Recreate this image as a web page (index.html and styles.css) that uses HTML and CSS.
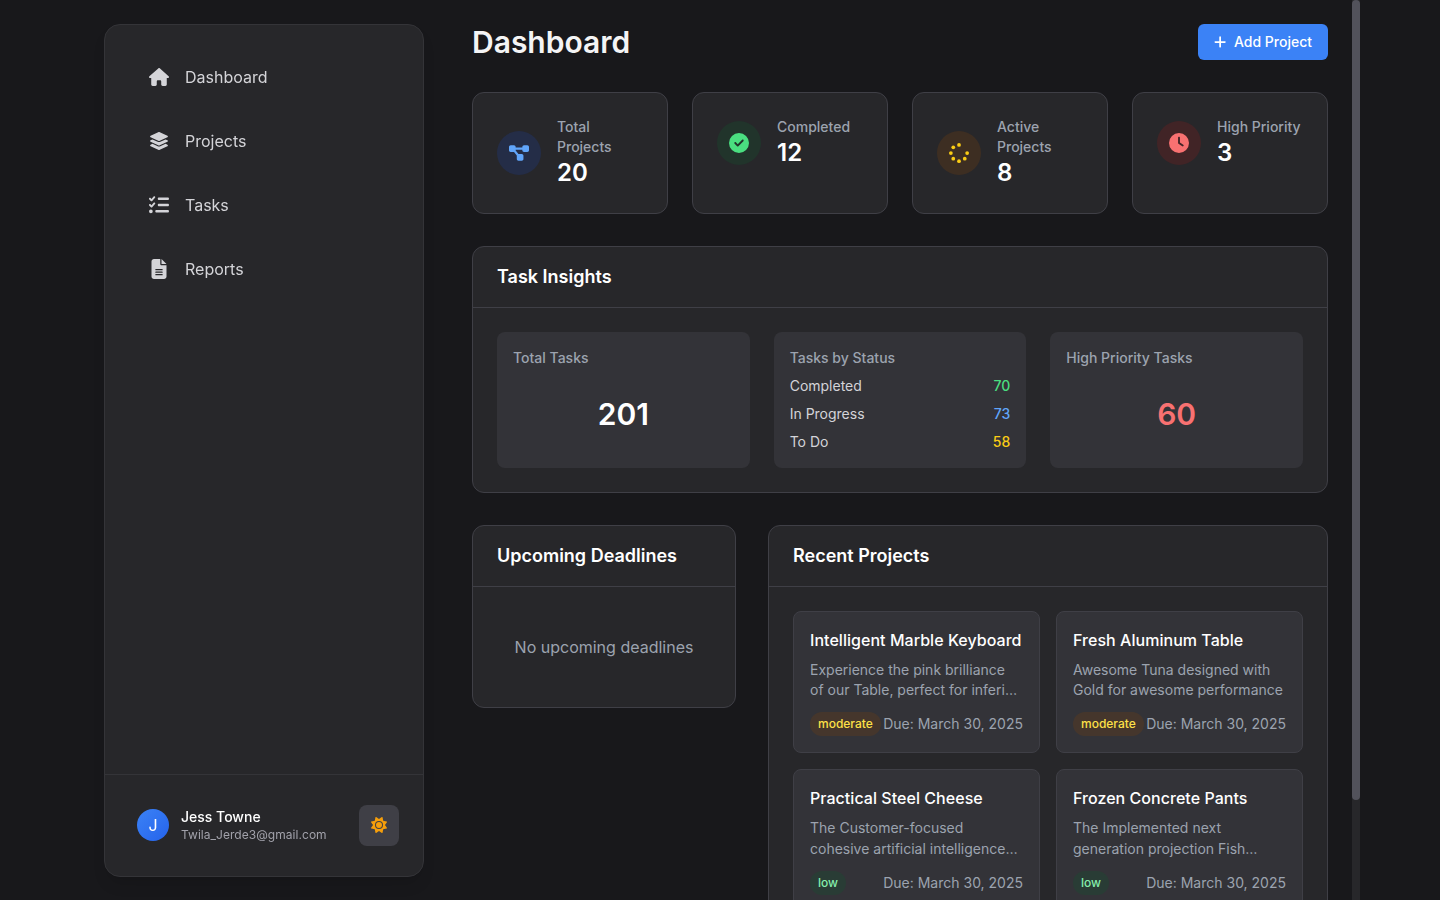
FILE: index.html
```html
<!DOCTYPE html>
<html lang="en">
<head>
<meta charset="utf-8">
<title>Dashboard</title>
<link rel="stylesheet" href="styles.css">
</head>
<body>
<div class="shell">
  <aside class="sidebar">
    <nav class="nav">
      <a class="nav-item"><span class="nav-icon"><svg viewBox="0 0 576 512"><path d="M575.8 255.5c0 18-15 32.1-32 32.1h-32l.7 160.2c0 2.7-.2 5.4-.5 8.1V472c0 22.1-17.9 40-40 40H456c-1.1 0-2.2 0-3.3-.1c-1.4 .1-2.8 .1-4.2 .1H416 392c-22.1 0-40-17.9-40-40V448 384c0-17.7-14.3-32-32-32H256c-17.7 0-32 14.3-32 32v64 24c0 22.1-17.9 40-40 40H160 128.1c-1.5 0-3-.1-4.5-.2c-1.2 .1-2.4 .2-3.6 .2H104c-22.1 0-40-17.9-40-40V360c0-.9 0-1.9 .1-2.8V287.6H32c-18 0-32-14-32-32.1c0-9 3-17 10-24L266.4 8c7-7 15-8 22-8s15 2 21 7L564.8 231.5c8 7 12 15 11 24z"/></svg></span>Dashboard</a>
      <a class="nav-item"><span class="nav-icon"><svg viewBox="0 0 576 512"><path d="M264.5 5.2c14.9-6.9 32.1-6.9 47 0l218.6 101c8.5 3.9 13.9 12.4 13.9 21.8s-5.4 17.9-13.9 21.8l-218.6 101c-14.9 6.9-32.1 6.9-47 0L45.9 149.8C37.4 145.8 32 137.3 32 128s5.4-17.9 13.9-21.8L264.5 5.2zM476.9 209.6l53.2 24.6c8.5 3.9 13.9 12.4 13.9 21.8s-5.4 17.9-13.9 21.8l-218.6 101c-14.9 6.9-32.1 6.9-47 0L45.9 277.8C37.4 273.8 32 265.3 32 256s5.4-17.9 13.9-21.8l53.2-24.6 152 70.2c23.4 10.8 50.4 10.8 73.8 0l152-70.2zm-152 198.2l152-70.2 53.2 24.6c8.5 3.9 13.9 12.4 13.9 21.8s-5.4 17.9-13.9 21.8l-218.6 101c-14.9 6.9-32.1 6.9-47 0L45.9 405.8C37.4 401.8 32 393.3 32 384s5.4-17.9 13.9-21.8l53.2-24.6 152 70.2c23.4 10.8 50.4 10.8 73.8 0z"/></svg></span>Projects</a>
      <a class="nav-item"><span class="nav-icon"><svg viewBox="0 0 512 512"><path d="M152.1 38.2c9.9 8.9 10.7 24 1.8 33.9l-72 80c-4.4 4.9-10.6 7.8-17.2 7.9s-12.9-2.4-17.6-7L7 113C-2.3 103.6-2.3 88.4 7 79s24.6-9.4 33.9 0l22.1 22.1 55.1-61.2c8.9-9.9 24-10.7 33.9-1.8zm0 160c9.9 8.9 10.7 24 1.8 33.9l-72 80c-4.4 4.9-10.6 7.8-17.2 7.9s-12.9-2.4-17.6-7L7 273c-9.4-9.4-9.4-24.6 0-33.9s24.6-9.4 33.9 0l22.1 22.1 55.1-61.2c8.9-9.9 24-10.7 33.9-1.8zM224 96c0-17.7 14.3-32 32-32H480c17.7 0 32 14.3 32 32s-14.3 32-32 32H256c-17.7 0-32-14.3-32-32zm0 160c0-17.7 14.3-32 32-32H480c17.7 0 32 14.3 32 32s-14.3 32-32 32H256c-17.7 0-32-14.3-32-32zM160 416c0-17.7 14.3-32 32-32H480c17.7 0 32 14.3 32 32s-14.3 32-32 32H192c-17.7 0-32-14.3-32-32zM48 368a48 48 0 1 1 0 96 48 48 0 1 1 0-96z"/></svg></span>Tasks</a>
      <a class="nav-item"><span class="nav-icon"><svg viewBox="0 0 384 512"><path d="M64 0C28.7 0 0 28.7 0 64V448c0 35.3 28.7 64 64 64H320c35.3 0 64-28.7 64-64V160H256c-17.7 0-32-14.3-32-32V0H64zM256 0V128H384L256 0zM112 256H272c8.8 0 16 7.2 16 16s-7.2 16-16 16H112c-8.8 0-16-7.2-16-16s7.2-16 16-16zm0 64H272c8.8 0 16 7.2 16 16s-7.2 16-16 16H112c-8.8 0-16-7.2-16-16s7.2-16 16-16zm0 64H272c8.8 0 16 7.2 16 16s-7.2 16-16 16H112c-8.8 0-16-7.2-16-16s7.2-16 16-16z"/></svg></span>Reports</a>
    </nav>
    <div class="account">
      <div class="avatar">J</div>
      <div class="who">
        <div class="who-name">Jess Towne</div>
        <div class="who-mail">Twila_Jerde3@gmail.com</div>
      </div>
      <button class="theme"><svg viewBox="0 0 512 512"><path d="M361.5 1.2c5 2.1 8.6 6.6 9.6 11.9L391 121l107.9 19.8c5.3 1 9.8 4.6 11.9 9.6s1.5 10.7-1.6 15.2L446.9 256l62.3 90.3c3.1 4.5 3.7 10.2 1.6 15.2s-6.6 8.6-11.9 9.6L391 391 371.1 498.9c-1 5.3-4.6 9.8-9.6 11.9s-10.7 1.5-15.2-1.6L256 446.9l-90.3 62.3c-4.5 3.1-10.2 3.7-15.2 1.6s-8.6-6.6-9.6-11.9L121 391 13.1 371.1c-5.3-1-9.8-4.6-11.9-9.6s-1.5-10.7 1.6-15.2L65.1 256 2.8 165.7c-3.1-4.5-3.7-10.2-1.6-15.2s6.6-8.6 11.9-9.6L121 121 140.9 13.1c1-5.3 4.6-9.8 9.6-11.9s10.7-1.5 15.2 1.6L256 65.1 346.3 2.8c4.5-3.1 10.2-3.7 15.2-1.6zM160 256a96 96 0 1 1 192 0 96 96 0 1 1 -192 0zm224 0a128 128 0 1 0 -256 0 128 128 0 1 0 256 0z"/></svg></button>
    </div>
  </aside>

  <main class="main">
    <header class="top">
      <h1>Dashboard</h1>
      <button class="add"><svg viewBox="0 0 448 512"><path d="M256 80c0-17.700-14.300-32-32-32s-32 14.300-32 32V224H48c-17.700 0-32 14.300-32 32s14.300 32 32 32H192V432c0 17.700 14.300 32 32 32s32-14.300 32-32V288H400c17.700 0 32-14.300 32-32s-14.300-32-32-32H256V80z"/></svg>Add Project</button>
    </header>

    <section class="stats">
      <div class="card stat">
        <div class="disc blue"><svg viewBox="0 0 576 512"><path d="M0 80C0 53.500 21.500 32 48 32h96c26.500 0 48 21.500 48 48V96H384V80c0-26.500 21.500-48 48-48h96c26.500 0 48 21.500 48 48v96c0 26.500-21.500 48-48 48H432c-26.500 0-48-21.500-48-48V160H192v16c0 1.700-.1 3.400-.3 5L272 288h96c26.500 0 48 21.500 48 48v96c0 26.500-21.500 48-48 48H272c-26.500 0-48-21.500-48-48V336c0-1.700 .1-3.400 .3-5L144 224H48c-26.500 0-48-21.500-48-48V80z"/></svg></div>
        <div class="stat-text"><div class="label">Total Projects</div><div class="value">20</div></div>
      </div>
      <div class="card stat">
        <div class="disc green"><svg viewBox="0 0 512 512"><path d="M256 512A256 256 0 1 0 256 0a256 256 0 1 0 0 512zM369 209L241 337c-9.400 9.400-24.600 9.400-33.900 0l-64-64c-9.400-9.400-9.400-24.600 0-33.900s24.600-9.400 33.900 0l47 47L335 175c9.400-9.400 24.600-9.400 33.900 0s9.400 24.600 0 33.900z"/></svg></div>
        <div class="stat-text"><div class="label">Completed</div><div class="value">12</div></div>
      </div>
      <div class="card stat">
        <div class="disc yellow"><svg viewBox="0 0 512 512"><circle cx="256" cy="48" r="48"/><circle cx="256" cy="464" r="48"/><circle cx="48" cy="256" r="48"/><circle cx="464" cy="256" r="48"/><circle cx="109" cy="109" r="48"/><circle cx="109" cy="403" r="48"/><circle cx="403" cy="403" r="48"/></svg></div>
        <div class="stat-text"><div class="label">Active Projects</div><div class="value">8</div></div>
      </div>
      <div class="card stat">
        <div class="disc red"><svg viewBox="0 0 512 512"><path d="M256 0a256 256 0 1 1 0 512A256 256 0 1 1 256 0zM232 120V256c0 8 4 15.500 10.700 20l96 64c11 7.400 25.900 4.400 33.300-6.700s4.400-25.900-6.700-33.300L280 243.200V120c0-13.300-10.700-24-24-24s-24 10.700-24 24z"/></svg></div>
        <div class="stat-text"><div class="label">High Priority</div><div class="value">3</div></div>
      </div>
    </section>

    <section class="card insights">
      <h2>Task Insights</h2>
      <div class="tiles">
        <div class="tile"><div class="label">Total Tasks</div><div class="big">201</div></div>
        <div class="tile">
          <div class="label">Tasks by Status</div>
          <div class="row"><span>Completed</span><b class="t-green">70</b></div>
          <div class="row"><span>In Progress</span><b class="t-blue">73</b></div>
          <div class="row"><span>To Do</span><b class="t-yellow">58</b></div>
        </div>
        <div class="tile"><div class="label">High Priority Tasks</div><div class="big t-red">60</div></div>
      </div>
    </section>

    <div class="lower">
      <section class="card">
        <h2>Upcoming Deadlines</h2>
        <div class="empty">No upcoming deadlines</div>
      </section>
      <section class="card">
        <h2>Recent Projects</h2>
        <div class="projects">
          <article class="project">
            <h3>Intelligent Marble Keyboard</h3>
            <p>Experience the pink brilliance<br>of our Table, perfect for inferi…</p>
            <div class="meta"><span class="badge moderate">moderate</span><span>Due: March 30, 2025</span></div>
          </article>
          <article class="project">
            <h3>Fresh Aluminum Table</h3>
            <p>Awesome Tuna designed with<br>Gold for awesome performance</p>
            <div class="meta"><span class="badge moderate">moderate</span><span>Due: March 30, 2025</span></div>
          </article>
          <article class="project">
            <h3>Practical Steel Cheese</h3>
            <p>The Customer-focused<br>cohesive artificial intelligence…</p>
            <div class="meta"><span class="badge low">low</span><span>Due: March 30, 2025</span></div>
          </article>
          <article class="project">
            <h3>Frozen Concrete Pants</h3>
            <p>The Implemented next<br>generation projection Fish…</p>
            <div class="meta"><span class="badge low">low</span><span>Due: March 30, 2025</span></div>
          </article>
        </div>
      </section>
    </div>
  </main>
  <div class="scroll"><div class="thumb"></div></div>
</div>
</body>
</html>
```

FILE: styles.css
```css
* { box-sizing: border-box; margin: 0; padding: 0; }
body {
  background: #18181b;
  color: #fff;
  font-family: Inter, "Liberation Sans", sans-serif;
  font-size: 16px;
  line-height: 24px;
  height: 100vh;
  overflow: hidden;
}
button { border: 0; font: inherit; color: inherit; }
svg { display: block; fill: currentColor; }

.shell { width: 1280px; height: 900px; margin: 0 auto; display: flex; overflow: hidden; }

.sidebar {
  width: 320px;
  height: 853px;
  margin: 24px 0 0 24px;
  flex: none;
  display: flex;
  flex-direction: column;
  background: #27272a;
  border: 1px solid #343438;
  border-radius: 16px;
  box-shadow: 0 10px 15px -3px rgba(0, 0, 0, .1), 0 4px 6px -4px rgba(0, 0, 0, .1);
  will-change: transform;
}
.nav { flex: 1; padding: 28px 32px; display: flex; flex-direction: column; gap: 16px; }
.nav-item { height: 48px; padding-left: 12px; display: flex; align-items: center; gap: 16px; color: #d4d4d8; }
.nav-icon { width: 20px; height: 20px; display: flex; justify-content: center; align-items: center; }
.nav-icon svg { width: 20px; height: 20px; }
.account { height: 102px; border-top: 1px solid #343438; padding: 0 24px 1px 32px; display: flex; align-items: center; }
.avatar {
  width: 32px; height: 32px; border-radius: 50%;
  background: linear-gradient(135deg, #3b82f6, #2563eb);
  display: flex; align-items: center; justify-content: center;
}
.who { margin-left: 12px; flex: 1; }
.who-name { font-size: 14px; font-weight: 500; line-height: 20px; }
.who-mail { font-size: 12px; line-height: 16px; color: #a1a1aa; letter-spacing: .04px; }
.theme {
  width: 40px; height: 41px; margin-top: 1px; padding-bottom: 1px; border-radius: 8px; background: #3f3f46; color: #f59e0b;
  display: flex; align-items: center; justify-content: center;
}
.theme svg { width: 16px; height: 16px; }

.main { width: 928px; flex: none; padding: 24px 24px 0 48px; }
.top { height: 36px; display: flex; align-items: center; justify-content: space-between; margin-bottom: 32px; }
h1 { font-size: 30px; line-height: 36px; font-weight: 600; color: #f4f4f5; }
.add {
  height: 36px; padding: 0 16px; border-radius: 6px; background: #3b82f6;
  font-size: 14px; font-weight: 500; display: flex; align-items: center; gap: 8px;
}
.add svg { width: 12.25px; height: 14px; }

.card { background: #27272a; border: 1px solid #3f3f46; border-radius: 12px; }
.stats { display: grid; grid-template-columns: repeat(4, 1fr); gap: 24px; margin-bottom: 32px; }
.stat { height: 122px; padding: 24px; display: flex; align-items: flex-start; gap: 16px; }
.stat-text { flex: 1; margin-right: -4px; }
.disc { width: 44px; height: 44px; border-radius: 50%; flex: none; display: flex; align-items: center; justify-content: center; margin-top: 4px; }
.stat:nth-child(odd) .disc { margin-top: 14px; }
.disc svg { width: 20px; height: 20px; }
.blue { background: rgba(30, 58, 138, .3); color: #60a5fa; }
.green { background: rgba(20, 83, 45, .3); color: #4ade80; }
.yellow { background: rgba(113, 63, 18, .3); color: #facc15; }
.red { background: rgba(127, 29, 29, .3); color: #f87171; }
.label { font-size: 14px; line-height: 20px; font-weight: 500; color: #9ca3af; }
.value { font-size: 24px; line-height: 32px; font-weight: 600; }

h2 { font-size: 18px; line-height: 28px; font-weight: 600; padding: 16px 24px; border-bottom: 1px solid #3f3f46; }
.insights { margin-bottom: 32px; }
.tiles { padding: 24px; display: grid; grid-template-columns: repeat(3, 1fr); gap: 24px; }
.tile { height: 136px; padding: 16px; border-radius: 8px; background: #333338; display: flex; flex-direction: column; gap: 8px; }
.big { flex: 1; display: flex; align-items: center; justify-content: center; font-size: 30px; line-height: 36px; font-weight: 600; }
.row { display: flex; justify-content: space-between; font-size: 14px; line-height: 20px; color: #d4d4d8; }
.row b { font-weight: 500; }
.row .t-green { color: #4ade80; }
.row .t-blue { color: #60a5fa; }
.row .t-yellow { color: #facc15; }
.t-red { color: #f87171; }

.lower { display: grid; grid-template-columns: 264px 560px; gap: 32px; align-items: start; }
.empty { padding: 48px 24px; text-align: center; color: #9ca3af; }
.projects { padding: 24px; display: grid; grid-template-columns: 1fr 1fr; gap: 16px; }
.project { background: #333338; border: 1px solid #3f3f46; border-radius: 8px; padding: 16px; white-space: nowrap; min-width: 0; }
h3 { font-size: 16px; line-height: 24px; font-weight: 500; margin-bottom: 8px; letter-spacing: .04px; }
.project p { font-size: 14px; line-height: 20.2px; color: #9ca3af; margin-bottom: 12px; }
.meta { display: flex; align-items: center; justify-content: space-between; font-size: 14px; line-height: 20px; color: #9ca3af; }
.badge { padding: 4px 8px; border-radius: 12px; font-size: 12px; line-height: 16px; font-weight: 500; }
.moderate { background: rgba(113, 63, 18, .3); color: #fde047; }
.low { background: rgba(20, 83, 45, .3); color: #86efac; }

.scroll { width: 8px; height: 900px; background: #27272a; flex: none; }
.thumb { height: 800px; border-radius: 4px; background: #52525b; }
```
